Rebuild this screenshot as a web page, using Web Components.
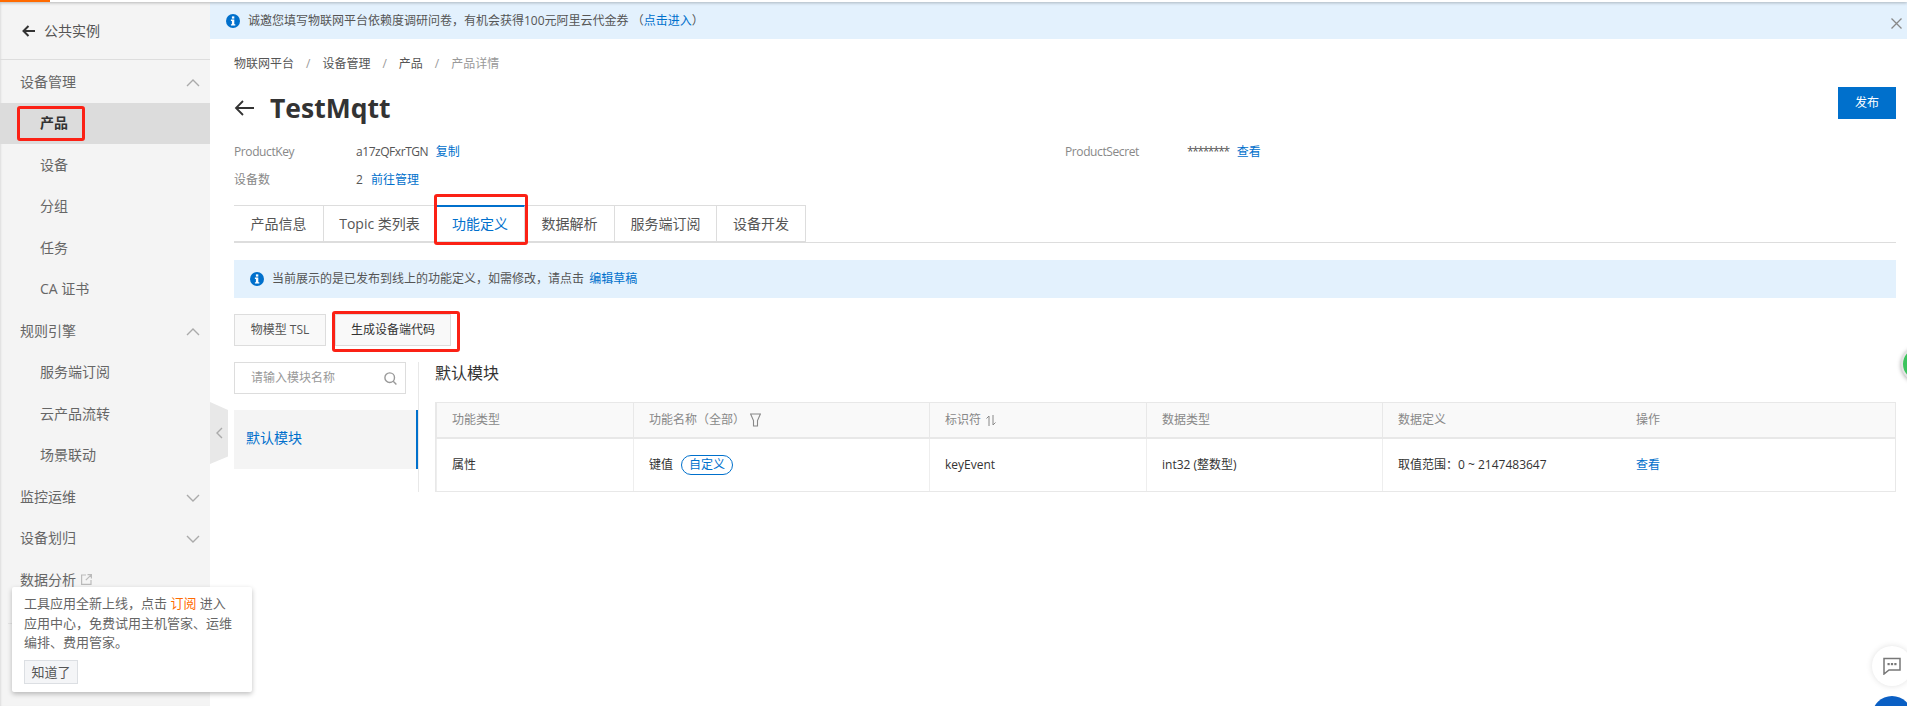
<!DOCTYPE html>
<html>
<head>
<meta charset="utf-8">
<style>
  html, body { margin: 0; height: 100%; }
  body {
    height: 706px; overflow: hidden; background: #fff; color: #333;
    font: 12px/18px "Open Sans", "Noto Sans CJK SC", sans-serif;
    position: relative;
  }
  #app { display: flex; height: 704px; }
  #main { flex: 1; min-width: 0; display: flex; flex-direction: column; }
  #content { padding: 0 11px 0 24px; display: flex; flex-direction: column; }
  #modules { display: flex; margin-top: 16px; }
  .draft { margin-left: 2px; }
</style>
</head>
<body>
  <top-strip></top-strip>
  <div id="app">
    <side-bar></side-bar>
    <div id="main">
      <info-notice closable style="height:37px;padding-left:16px">
        诚邀您填写物联网平台依赖度调研问卷，有机会获得100元阿里云代金券 （<a-link>点击进入</a-link>）
      </info-notice>
      <div id="content">
        <bread-crumb></bread-crumb>
        <page-head></page-head>
        <product-info></product-info>
        <tab-bar></tab-bar>
        <info-notice style="height:38px;margin-top:17px;padding-left:16px">
          当前展示的是已发布到线上的功能定义，如需修改，请点击 <a-link class="draft">编辑草稿</a-link>
        </info-notice>
        <tool-buttons></tool-buttons>
        <div id="modules">
          <module-list></module-list>
          <module-detail></module-detail>
        </div>
      </div>
    </div>
  </div>
  <float-widgets></float-widgets>

  <script>
    const RED = '#fb2115';

    function component(name, css, html) {
      customElements.define(name, class extends HTMLElement {
        constructor() {
          super();
          this.attachShadow({ mode: 'open' });
          this.shadowRoot.innerHTML = `<style>${css}</style>${html}`;
        }
      });
    }

    const chevronUp = `<svg width="14" height="8" viewBox="0 0 14 8" fill="none" stroke="#aaa" stroke-width="1.4"><path d="M1 7l6-6 6 6"/></svg>`;
    const chevronDown = `<svg width="14" height="8" viewBox="0 0 14 8" fill="none" stroke="#aaa" stroke-width="1.4"><path d="M1 1l6 6 6-6"/></svg>`;
    const infoIcon = `<svg width="14" height="14" viewBox="0 0 14 14"><circle cx="7" cy="7" r="7" fill="#0070cc"/><rect x="5.9" y="2.4" width="2.4" height="2.2" fill="#fff"/><path d="M4.9 5.6h3.4v4.6h1v1.3H4.9v-1.3h1V6.9h-1z" fill="#fff"/></svg>`;

    component('a-link', `:host { color: #0070cc; }`, `<slot></slot>`);

    component('top-strip', `
      :host { display: block; height: 2px; background: #fff; position: relative; z-index: 5; box-shadow: 0 1px 3px rgba(0,0,0,.3); }
      i { display: block; width: 50px; height: 2px; background: #ff6a00; }
    `, `<i></i>`);

    component('nav-item', `
      :host {
        display: flex; align-items: center; justify-content: space-between; position: relative;
        height: 41.5px; padding: 0 10px 0 20px; font-size: 14px; color: #666; box-sizing: border-box;
      }
      :host([sub]) { padding-left: 40px; }
      :host([active]) { background: #dcdcdc; color: #333; font-weight: 700; }
      .mark { display: none; position: absolute; left: 17px; top: 3px; width: 68px; height: 35px; box-sizing: border-box; border: 3px solid ${RED}; border-radius: 3px; }
      :host([active]) .mark { display: block; }
      span { display: inline-flex; align-items: center; gap: 5px; }
    `, `<span><slot></slot></span><slot name="end"></slot><div class="mark"></div>`);

    component('side-bar', `
      :host {
        display: block; width: 210px; flex: none; background: #f4f4f4; position: relative;
        box-shadow: inset 2px 0 2px -1px #ddd; font-size: 14px;
      }
      .back { height: 57px; border-bottom: 1px solid #ddd; display: flex; align-items: center; gap: 9px; padding-left: 22px; color: #555; box-sizing: content-box; }
      nav { padding-top: 1px; }
      .rule { height: 1px; background: #e4e4e4; margin: 22px 0 0 8px; }
      .handle { position: absolute; left: 210px; top: 400px; width: 18px; height: 62px; background: #e8e8e8;
        clip-path: polygon(0 0, 100% 13%, 100% 88%, 0 100%); display: flex; align-items: center; justify-content: center; }
      .tip { position: absolute; left: 12px; top: 585px; width: 240px; height: 105px; box-sizing: border-box; background: #fff; z-index: 3;
        padding: 7px 0 7px 12px; font-size: 13px; line-height: 19.5px; color: #666; box-shadow: 0 2px 5px rgba(0,0,0,.25); border-radius: 2px; white-space: nowrap; }
      .tip b { color: #ff6a00; font-weight: 400; }
      .tip button { display: block; margin-top: 7px; width: 54px; height: 24px; padding: 0; font: inherit; line-height: 22px; color: #555;
        background: #f4f5f7; border: 1px solid #dcdfe3; }
    `, `
      <div class="back">
        <svg width="13" height="12" viewBox="0 0 13 12" fill="none" stroke="#333" stroke-width="2"><path d="M13 6H2M6.500 1L1.500 6l5 5"/></svg>
        <span>公共实例</span>
      </div>
      <nav>
        <nav-item>设备管理<span slot="end">${chevronUp}</span></nav-item>
        <nav-item sub active>产品</nav-item>
        <nav-item sub>设备</nav-item>
        <nav-item sub>分组</nav-item>
        <nav-item sub>任务</nav-item>
        <nav-item sub>CA 证书</nav-item>
        <nav-item>规则引擎<span slot="end">${chevronUp}</span></nav-item>
        <nav-item sub>服务端订阅</nav-item>
        <nav-item sub>云产品流转</nav-item>
        <nav-item sub>场景联动</nav-item>
        <nav-item>监控运维<span slot="end">${chevronDown}</span></nav-item>
        <nav-item>设备划归<span slot="end">${chevronDown}</span></nav-item>
        <nav-item>数据分析
          <svg width="11" height="11" viewBox="0 0 11 11" fill="none" stroke="#bbb" stroke-width="1.2"><path d="M5 1H.6v9.400H10V6M6.500.6h3.900v3.900M10.200.8L4.800 6.200"/></svg>
        </nav-item>
      </nav>
      <div class="rule"></div>
      <div class="handle"><svg width="7" height="12" viewBox="0 0 7 12" fill="none" stroke="#aaa" stroke-width="1.400"><path d="M6 1L1 6l5 5"/></svg></div>
      <div class="tip">
        <div>工具应用全新上线，点击 <b>订阅</b> 进入</div>
        <div>应用中心，免费试用主机管家、运维</div>
        <div>编排、费用管家。</div>
        <button>知道了</button>
      </div>
    `);

    component('info-notice', `
      :host { display: flex; align-items: center; gap: 8px; box-sizing: border-box; background: #e3f1fd; color: #555; position: relative; font-size: 12px; }
      svg { flex: none; }
      .close { display: none; position: absolute; right: 5px; top: 16px; }
      :host([closable]) .close { display: block; }
    `, `${infoIcon}<div><slot></slot></div>
      <svg class="close" width="11" height="11" viewBox="0 0 11 11" fill="none" stroke="#888" stroke-width="1.300"><path d="M.5.5l10 10M10.500.5l-10 10"/></svg>`);

    component('bread-crumb', `
      :host { display: flex; gap: 12px; margin-top: 16px; height: 18px; color: #555; }
      i { font-style: normal; color: #999; }
      span:last-child { color: #999; }
    `, `<span>物联网平台</span><i>/</i><span>设备管理</span><i>/</i><span>产品</span><i>/</i><span>产品详情</span>`);

    component('page-head', `
      :host { display: flex; justify-content: space-between; align-items: flex-start; height: 51px; margin-top: 14px; }
      .title { display: flex; align-items: center; gap: 16px; margin-top: 5px; height: 32px; }
      h1 { margin: 0; font: 700 26.5px/32px "Open Sans", sans-serif; color: #333; }
      button { width: 58px; height: 32px; padding: 0; border: 0; background: #0070cc; color: #fff; font: inherit; }
    `, `
      <div class="title">
        <svg width="20" height="16" viewBox="0 0 20 16" fill="none" stroke="#333" stroke-width="1.800"><path d="M20 8H2M9 1L2 8l7 7"/></svg>
        <h1>TestMqtt</h1>
      </div>
      <button>发布</button>
    `);

    component('product-info', `
      :host { display: grid; grid-template-columns: 122px 709px 122px 1fr; grid-auto-rows: 28px; align-items: center; color: #555; }
      .k { color: #888; letter-spacing: -.4px; }
      .k.zh { letter-spacing: 0; }
      .v { letter-spacing: -.45px; }
      .stars { letter-spacing: -1.4px; }
      a-link { margin-left: 5px; letter-spacing: 0; }
    `, `
      <span class="k">ProductKey</span><span class="v">a17zQFxrTGN <a-link>复制</a-link></span>
      <span class="k">ProductSecret</span><span><span class="stars">********</span> <a-link>查看</a-link></span>
      <span class="k zh">设备数</span><span>2 <a-link>前往管理</a-link></span>
    `);

    component('tab-bar', `
      :host { display: flex; height: 38px; box-sizing: border-box; margin-top: 11px; border-bottom: 1px solid #ddd; font-size: 14px; color: #555; position: relative; }
      div { height: 37px; box-sizing: border-box; border: 1px solid #ddd; border-left: 0; display: flex; align-items: center; justify-content: center; }
      div:first-child { border-left: 1px solid #ddd; }
      .on { color: #0070cc; border-top: 2px solid #0070cc; background: #fff; position: relative; }
      .on::after { content: ""; position: absolute; left: -2px; top: -13px; width: 94px; height: 51px; box-sizing: border-box; border: 3px solid ${RED}; border-radius: 3px; }
    `, `
      <div style="width:90px">产品信息</div>
      <div style="width:112px">Topic 类列表</div>
      <div style="width:89px" class="on">功能定义</div>
      <div style="width:90px">数据解析</div>
      <div style="width:102px">服务端订阅</div>
      <div style="width:89px">设备开发</div>
    `);

    component('tool-buttons', `
      :host { display: flex; gap: 9px; margin-top: 16px; position: relative; }
      button { height: 32px; padding: 0; background: #f9f9f9; border: 1px solid #ddd; font: inherit; color: #555; }
      .mark { position: absolute; left: 98px; top: -3px; width: 128px; height: 41px; box-sizing: border-box; border: 3px solid ${RED}; border-radius: 3px; }
    `, `
      <button style="width:92px">物模型 TSL</button>
      <button style="width:116px;color:#333">生成设备端代码</button>
      <div class="mark"></div>
    `);

    component('module-list', `
      :host { display: block; width: 185px; flex: none; height: 130px; box-sizing: border-box; border-right: 1px solid #e8e8e8; }
      .search { width: 172px; height: 32px; box-sizing: border-box; border: 1px solid #ddd; display: flex; align-items: center; justify-content: space-between; padding: 0 8px 0 16px; color: #999; font-size: 12px; }
      .item { margin-top: 16px; height: 59px; box-sizing: border-box; background: #f4f4f4; border-right: 2px solid #0070cc; color: #0070cc; font-size: 14px; display: flex; align-items: center; padding: 0 0 3px 12px; }
    `, `
      <div class="search">
        <span>请输入模块名称</span>
        <svg width="13" height="13" viewBox="0 0 13 13" fill="none" stroke="#999" stroke-width="1.400"><circle cx="5.700" cy="5.700" r="4.800"/><path d="M9.200 9.200l3.200 3.200"/></svg>
      </div>
      <div class="item">默认模块</div>
    `);

    component('module-detail', `
      :host { display: block; flex: 1; min-width: 0; padding-left: 16px; }
      h2 { margin: -1px 0 17px; font: 400 16px/24px "Open Sans", "Noto Sans CJK SC", sans-serif; color: #333; }
    `, `<h2>默认模块</h2><feature-table></feature-table>`);

    component('feature-table', `
      :host { display: grid; grid-template-columns: 197px 296px 217px 236px 238px 1fr; box-sizing: border-box; border: 1px solid #e8e8e8; font-size: 12px; color: #333; }
      div { display: flex; align-items: center; gap: 5px; padding-left: 15px; box-sizing: border-box; border-left: 1px solid #eee; }
      div:nth-child(6n+1) { border-left: 0; padding-left: 16px; }
      .h { height: 36px; background: #f9f9f9; color: #888; border-bottom: 2px solid #e8e8e8; border-left-color: #e8e8e8; }
      .c { height: 52px; }
      .tag { color: #0070cc; border: 1px solid #0070cc; border-radius: 10px; height: 20px; line-height: 18px; padding: 0 7px; box-sizing: border-box; margin-left: 3px; }
    `, `
      <div class="h">功能类型</div>
      <div class="h">功能名称（全部）<svg width="11" height="14" viewBox="0 0 11 14" fill="none" stroke="#888" stroke-width="1.100"><path d="M.6 1h9.800L7.500 7.500V13h-4V7.500z"/></svg></div>
      <div class="h">标识符 <svg width="10" height="11" viewBox="0 0 10 11" fill="none" stroke="#888" stroke-width="1"><path d="M3 11V1L.5 3.500M7 0v10l2.500-2.500"/></svg></div>
      <div class="h">数据类型</div>
      <div class="h">数据定义</div>
      <div class="h">操作</div>
      <div class="c">属性</div>
      <div class="c">键值 <span class="tag">自定义</span></div>
      <div class="c">keyEvent</div>
      <div class="c">int32 (整数型)</div>
      <div class="c">取值范围：0 ~ 2147483647</div>
      <div class="c" style="color:#0070cc">查看</div>
    `);

    component('float-widgets', `
      :host { display: block; }
      .green { position: absolute; left: 1901px; top: 346px; width: 36px; height: 36px; box-sizing: border-box; border-radius: 50%; background: #3cc45d; border: 2px solid #e4e4e4; box-shadow: 0 1px 4px rgba(0,0,0,.35); }
      .chat { position: absolute; left: 1872px; top: 646px; width: 40px; height: 40px; border-radius: 50%; background: #fff; box-shadow: 0 0 6px rgba(0,0,0,.12); display: flex; align-items: center; justify-content: center; }
      .blue { position: absolute; left: 1872px; top: 696px; width: 40px; height: 40px; border-radius: 50%; background: #0a5fc4; }
    `, `
      <div class="green"></div>
      <div class="chat">
        <svg width="18" height="18" viewBox="0 0 18 18" style="margin-right:1px"><path d="M1 1.500h16v11.500H6L1 17z" fill="none" stroke="#777" stroke-width="1.500"/><rect x="4.500" y="6" width="2.200" height="2.200" fill="#777"/><rect x="7.900" y="6" width="2.200" height="2.200" fill="#777"/><rect x="11.300" y="6" width="2.200" height="2.200" fill="#777"/></svg>
      </div>
      <div class="blue"></div>
    `);
  </script>
</body>
</html>
